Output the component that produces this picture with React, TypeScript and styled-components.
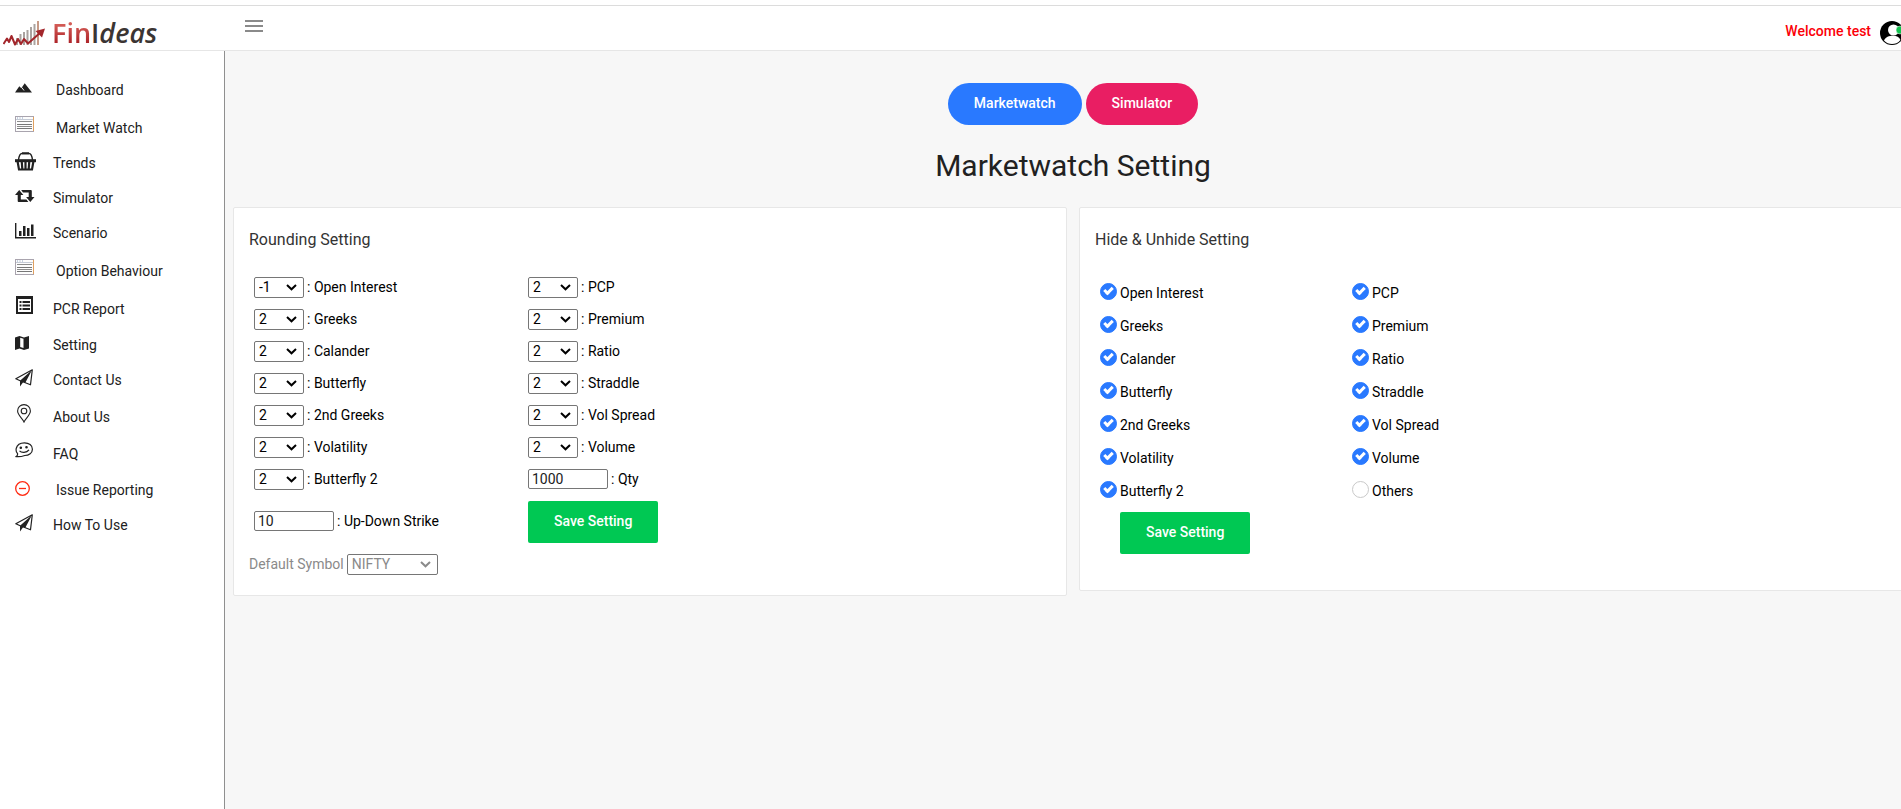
import React, { useState } from "react";
import styled, { createGlobalStyle, css } from "styled-components";

const GlobalStyle = createGlobalStyle`
  *, *::before, *::after { box-sizing: border-box; }
  html, body { margin: 0; background: #f7f7f7; }
  body {
    overflow-x: hidden;
    font-family: Roboto, "Liberation Sans", sans-serif;
    font-size: 14px;
    line-height: 20px;
    color: #212121;
  }
  button, input, select { font: inherit; }
`;

/* The page runs slightly past the right edge of the window. */
const Page = styled.div`
  display: flex;
  flex-direction: column;
  width: calc(100% + 18px);
  min-height: 100vh;
  padding-top: 5px;
  background: #fff;
`;

const TopBar = styled.header`
  display: flex;
  align-items: center;
  height: 46px;
  padding-right: 15px;
  border-top: 1px solid #dcdcdc;
  border-bottom: 1px solid #e6e6e6;
`;

const Brand = styled.a`
  display: flex;
  align-items: center;
  gap: 7px;
  width: 241px;
  padding: 10px 0 0 3px;
  text-decoration: none;
`;

const BrandName = styled.span`
  font-family: "Open Sans", sans-serif;
  font-size: 27px;
  line-height: 28px;
  font-weight: 600;
  color: #3b3533;
  white-space: nowrap;
`;

const BrandRed = styled.span`
  color: transparent;
  background: linear-gradient(#dd6a62 15%, #a81c22 85%);
  background-clip: text;
`;

const BrandSlant = styled.span`
  font-style: italic;
`;

const MenuToggle = styled.button`
  display: flex;
  padding: 4px;
  margin-bottom: 4px;
  border: 0;
  background: none;
  cursor: pointer;
`;

const Account = styled.div`
  display: flex;
  align-items: center;
  gap: 9px;
  margin-left: auto;
  padding-top: 10px;
`;

const Welcome = styled.span`
  padding-bottom: 4px;
  font-weight: 500;
  color: #fb0007;
`;

const Body = styled.div`
  display: flex;
  flex: 1;
`;

const Sidebar = styled.nav`
  flex: 0 0 225px;
  padding-top: 19px;
  border-right: 1px solid #8f8f8f;
  background: #fff;
`;

const Menu = styled.ul`
  margin: 0;
  padding: 0;
  list-style: none;
`;

const MenuLink = styled.a<{ $height: number; $wide?: boolean }>`
  display: flex;
  align-items: flex-end;
  gap: ${(p) => (p.$wide ? 21 : 18)}px;
  height: ${(p) => p.$height}px;
  padding-left: 15px;
  color: #212121;
  text-decoration: none;
`;

const IconSlot = styled.span<{ $lift: number }>`
  display: flex;
  align-items: center;
  flex: 0 0 20px;
  min-width: 0;
  height: 20px;
  margin-bottom: ${(p) => p.$lift}px;

  svg { flex: none; }
`;

const Main = styled.main`
  flex: 1;
  min-width: 0;
  padding: 32px 6px 0 8px;
  background: #f7f7f7;
`;

const Switcher = styled.div`
  display: flex;
  justify-content: center;
  gap: 4px;
`;

const buttonBase = css`
  height: 42px;
  padding: 0 26px 2px;
  border: 0;
  font-weight: 500;
  color: #fff;
  cursor: pointer;
`;

const Pill = styled.button<{ $color: string }>`
  ${buttonBase}
  border-radius: 21px;
  background: ${(p) => p.$color};
`;

const SaveButton = styled.button`
  ${buttonBase}
  justify-self: start;
  border-radius: 2px;
  background: #00c853;
`;

const PageTitle = styled.h1`
  margin: 21px 0;
  font-size: 30px;
  line-height: 40px;
  font-weight: 400;
  text-align: center;
`;

const Cards = styled.div`
  display: grid;
  grid-template-columns: 1fr 1fr;
  align-items: start;
  gap: 12px;
`;

const Card = styled.form<{ $bottom: number }>`
  padding: 20px 15px ${(p) => p.$bottom}px;
  border: 1px solid #e7e7e7;
  border-radius: 2px;
  background: #fff;
  color: #000;
`;

const CardTitle = styled.h2<{ $gap: number }>`
  margin: 0 0 ${(p) => p.$gap}px;
  font-size: 16px;
  line-height: 24px;
  font-weight: 400;
  color: #333;
`;

const FieldGrid = styled.div`
  display: grid;
  grid-template-columns: 274px 274px;
  grid-auto-rows: minmax(32px, auto);
  align-items: center;
  padding-left: 5px;
`;

const Field = styled.div`
  display: flex;
  align-items: center;
  gap: 3px;
`;

const SaveCell = styled.div`
  display: grid;
  padding: 6px 0 4px;
`;

const SelectBox = styled.span<{ $width: number }>`
  position: relative;
  display: flex;
  width: ${(p) => p.$width}px;

  svg {
    position: absolute;
    right: 7px;
    top: 7px;
    pointer-events: none;
  }
`;

const Select = styled.select`
  appearance: none;
  width: 100%;
  height: 21px;
  padding: 0 20px 0 4px;
  border: 1px solid #767676;
  border-radius: 2px;
  background: #fff;
  line-height: 18px;
  color: inherit;
`;

const TextBox = styled.input`
  width: 80px;
  height: 20px;
  padding: 0 3px;
  border: 1px solid #767676;
  border-radius: 2px;
  color: #212121;
`;

const DefaultRow = styled.div`
  display: flex;
  align-items: center;
  gap: 3px;
  height: 34px;
  color: #8a8a8a;
`;

const CheckGrid = styled.div`
  display: grid;
  grid-template-columns: 252px 252px;
  grid-auto-rows: 33px;
  align-items: center;
  padding-left: 5px;
`;

const CheckField = styled.div`
  display: flex;
  align-items: center;
  gap: 3px;
`;

const CheckLabel = styled.label`
  padding-top: 2px;
`;

const Tick = styled.input`
  appearance: none;
  display: grid;
  place-items: center;
  width: 17px;
  height: 17px;
  margin: 0;
  border: 1px solid #c9c9c9;
  border-radius: 50%;
  background: #fff;

  &:checked {
    border-color: #2979ff;
    background: #2979ff;
  }

  &:checked::before {
    content: "";
    width: 9px;
    height: 6px;
    margin-bottom: 3px;
    border: solid #fff;
    border-width: 0 0 3px 3px;
    transform: rotate(-45deg);
  }
`;

const SaveRow = styled.div`
  display: grid;
  padding: 6px 0 0 25px;
`;

const LogoMark = () => (
  <svg width="42" height="25" viewBox="0 0 42 25" aria-hidden="true">
    <g fill="#aaa3a0">
      <rect x="13" y="17" width="2" height="7" />
      <rect x="16.5" y="13" width="2" height="11" />
      <rect x="20" y="11" width="2" height="13" />
      <rect x="23.5" y="9" width="2" height="15" />
      <rect x="27" y="6" width="2" height="18" />
      <rect x="30.5" y="3" width="2" height="21" />
    </g>
    <rect x="34" y="0" width="2" height="24" fill="#c79a86" />
    <path d="M0.5 23L4 17.500L6 21L8.500 15L12 23.500L15 18L18 23L21 18L25 22.500L38 11" fill="none" stroke="#a3262b" strokeWidth="2" strokeLinejoin="round" />
    <path d="M42 7.500L32.500 10L39 16.500Z" fill="#a3262b" />
  </svg>
);

const Bars = () => (
  <svg width="18" height="12" viewBox="0 0 18 12" fill="#8a8a8a" aria-hidden="true">
    <path d="M0 0h18v2H0zM0 5h18v2H0zM0 10h18v2H0z" />
  </svg>
);

const Chevron = () => (
  <svg width="11" height="7" viewBox="0 0 11 7" fill="none" stroke="currentColor" strokeWidth="2" aria-hidden="true">
    <path d="M1 1l4.500 4.300L10 1" />
  </svg>
);

const Avatar = () => (
  <svg width="24" height="26" viewBox="0 0 24 26" role="img" aria-label="Account">
    <circle cx="12" cy="13" r="12" fill="#000" />
    <circle cx="13.500" cy="10" r="5.500" fill="#fff" />
    <path d="M4 20.500C5.500 17 9 15.800 13 15.800s6 1.200 7.500 4.200C18 23 15 24 12 24s-6-1-8-3.500z" fill="#fff" />
    <circle cx="20" cy="10" r="4" fill="#12c24e" stroke="#fff" strokeWidth="0.500" />
  </svg>
);

const Mountains = () => (
  <svg width="17" height="10" viewBox="0 0 17 10" fill="#212121">
    <path d="M0 9.500L4.300 3.200L6.300 5.200L9.700 0.300L17 9.500z" />
    <path d="M6.800 4.500L9 7.500" stroke="#fff" strokeWidth="0.900" />
  </svg>
);

const Listing = () => (
  <svg width="19" height="16" viewBox="0 0 19 16">
    <rect x="0.500" y="0.500" width="18" height="15" fill="#fdfdfd" stroke="#a9a4ae" />
    <path d="M1 3.500h17" stroke="#c5cbd6" />
    <path d="M2 2h1M4.500 2h1M7 2h1" stroke="#8aa0c0" />
    <path d="M2 5.500h15M2 10.500h15" stroke="#8c8c8c" />
    <path d="M2 8.500h15M2 12.500h15" stroke="#777" />
    <path d="M18.500 1v14" stroke="#e0a060" />
  </svg>
);

const Basket = () => (
  <svg width="21" height="19" viewBox="0 0 21 19" fill="none" stroke="#212121">
    <path d="M3.500 8C4 4 5 1.500 7 1.500h7c2 0 3 2.500 3.500 6.500" strokeWidth="1.400" />
    <path d="M7 1.300h7" strokeWidth="2" />
    <path d="M0 8.700h21" strokeWidth="3" />
    <path d="M2.500 9l1.500 8.500h13L18.500 9M6.700 9l.6 8M10.500 9v8M14.300 9l-.6 8" strokeWidth="2.200" />
  </svg>
);

const Repeat = () => (
  <svg width="20" height="12" viewBox="0 0 20 12" fill="#212121">
    <path d="M4.200 0L8.400 5H5.800V9.400H11.500L13.300 12H3.600Q2.700 12 2.700 11V5H0z" />
    <path d="M15.300 12L11.100 7H13.700V2.600H8L6.200 0H15.900Q16.800 0 16.800 1V7H19.500z" />
  </svg>
);

const Chart = () => (
  <svg width="21" height="16" viewBox="0 0 21 16" fill="#212121">
    <path d="M0 0h1.400v14H21v1.500H0zM4 8h2.500v5H4zM8 3h2.500v10H8zM12 5h2.500v8H12zM16 1.500h2.500V13H16z" />
  </svg>
);

const Report = () => (
  <svg width="18" height="18" viewBox="0 0 18 18">
    <rect x="1" y="0" width="17" height="18" fill="#212121" />
    <rect x="3" y="3" width="13" height="13" fill="#fff" />
    <path d="M4.500 5h2v2h-2zM4.500 8.500h2v2h-2zM4.500 12h2v2h-2zM7.500 5H15v2H7.500zM7.500 8.500H15v2H7.500zM7.500 12H15v2H7.500z" fill="#212121" />
  </svg>
);

const MapFold = () => (
  <svg width="14" height="14" viewBox="0 0 14 14">
    <path d="M0 1.500L4.500 0L9 1.500L14 0V12.500L9 14L4.500 12.500L0 14z" fill="#212121" />
    <path d="M5.200 1.800L8.500 2.800V12L5.200 11z" fill="#fff" />
  </svg>
);

const Plane = () => (
  <svg width="18" height="18" viewBox="0 0 18 18">
    <path d="M17.300 0.800L0.800 9.800L5.200 11.800L15.500 15.800z" fill="#fff" stroke="#212121" strokeWidth="1.200" strokeLinejoin="round" />
    <path d="M17 1L5 11.800V17.500L8.300 13L10.300 13.800z" fill="#212121" />
  </svg>
);

const Pin = () => (
  <svg width="18" height="19" viewBox="0 0 18 19" fill="none" stroke="#212121" strokeWidth="1.100">
    <path d="M9 18C7.500 14.500 2.600 11 2.600 7A6.400 6.400 0 0 1 15.400 7C15.400 11 10.500 14.500 9 18z" />
    <circle cx="9" cy="7" r="2.800" />
  </svg>
);

const Smiley = () => (
  <svg width="18" height="16" viewBox="0 0 18 16" fill="none" stroke="#212121" strokeWidth="1.200">
    <path d="M2.500 11.500C0.800 10 1 7.800 1.200 6.500C2 3 5.500 0.800 9.500 0.800C14 0.800 17.400 3.300 17.400 7.200C17.400 11 14 13.500 9.800 13.500C7.500 14.300 4.500 15 1.200 14.600C2.500 13.800 2.800 12.800 2.500 11.500z" />
    <path d="M4.500 8.800C6.500 11 11.500 11 14 7.800" />
    <circle cx="5.800" cy="5.800" r="0.700" fill="#212121" />
    <circle cx="11.500" cy="5.200" r="0.700" fill="#212121" />
  </svg>
);

const Minus = () => (
  <svg width="15" height="15" viewBox="0 0 15 15" fill="none" stroke="#ff2a12" strokeWidth="1.300">
    <circle cx="7.500" cy="7.500" r="6.800" />
    <path d="M4 7.500h7" />
  </svg>
);

const menu: { label: string; icon: React.FC; height: number; lift: number; wide?: boolean }[] = [
  { label: "Dashboard", icon: Mountains, height: 30, lift: 2, wide: true },
  { label: "Market Watch", icon: Listing, height: 38, lift: 4, wide: true },
  { label: "Trends", icon: Basket, height: 35, lift: 2 },
  { label: "Simulator", icon: Repeat, height: 35, lift: 2 },
  { label: "Scenario", icon: Chart, height: 35, lift: 2 },
  { label: "Option Behaviour", icon: Listing, height: 38, lift: 4, wide: true },
  { label: "PCR Report", icon: Report, height: 38, lift: 4 },
  { label: "Setting", icon: MapFold, height: 36, lift: 2 },
  { label: "Contact Us", icon: Plane, height: 35, lift: 2 },
  { label: "About Us", icon: Pin, height: 37, lift: 4 },
  { label: "FAQ", icon: Smiley, height: 37, lift: 4 },
  { label: "Issue Reporting", icon: Minus, height: 36, lift: 2, wide: true },
  { label: "How To Use", icon: Plane, height: 35, lift: 2 },
];

const rounding: { label: string; value: string; text?: boolean }[] = [
  { label: "Open Interest", value: "-1" },
  { label: "PCP", value: "2" },
  { label: "Greeks", value: "2" },
  { label: "Premium", value: "2" },
  { label: "Calander", value: "2" },
  { label: "Ratio", value: "2" },
  { label: "Butterfly", value: "2" },
  { label: "Straddle", value: "2" },
  { label: "2nd Greeks", value: "2" },
  { label: "Vol Spread", value: "2" },
  { label: "Volatility", value: "2" },
  { label: "Volume", value: "2" },
  { label: "Butterfly 2", value: "2" },
  { label: "Qty", value: "1000", text: true },
  { label: "Up-Down Strike", value: "10", text: true },
];

const columns = [
  "Open Interest", "PCP", "Greeks", "Premium", "Calander", "Ratio", "Butterfly",
  "Straddle", "2nd Greeks", "Vol Spread", "Volatility", "Volume", "Butterfly 2", "Others",
];

const slug = (s: string) => s.toLowerCase().replace(/[^a-z0-9]+/g, "-");

function DropDown(props: { id: string; value: string; options: string[]; width: number }) {
  return (
    <SelectBox $width={props.width}>
      <Select id={props.id} defaultValue={props.value}>
        {props.options.map((o) => (
          <option key={o}>{o}</option>
        ))}
      </Select>
      <Chevron />
    </SelectBox>
  );
}

export default function App() {
  const [menuOpen, setMenuOpen] = useState(true);

  return (
    <>
      <GlobalStyle />
      <Page>
        <TopBar>
          <Brand href="#">
            <LogoMark />
            <BrandName>
              <BrandRed>Fin</BrandRed>I<BrandSlant>deas</BrandSlant>
            </BrandName>
          </Brand>
          <MenuToggle type="button" aria-label="Toggle menu" onClick={() => setMenuOpen(!menuOpen)}>
            <Bars />
          </MenuToggle>
          <Account>
            <Welcome>Welcome test</Welcome>
            <Avatar />
          </Account>
        </TopBar>
        <Body>
          {menuOpen && (
            <Sidebar>
              <Menu>
                {menu.map(({ label, icon: Icon, height, lift, wide }) => (
                  <li key={label}>
                    <MenuLink href="#" $height={height} $wide={wide}>
                      <IconSlot $lift={lift} aria-hidden="true">
                        <Icon />
                      </IconSlot>
                      {label}
                    </MenuLink>
                  </li>
                ))}
              </Menu>
            </Sidebar>
          )}
          <Main>
            <Switcher>
              <Pill type="button" $color="#2979ff">Marketwatch</Pill>
              <Pill type="button" $color="#e91e63">Simulator</Pill>
            </Switcher>
            <PageTitle>Marketwatch Setting</PageTitle>
            <Cards>
              <Card $bottom={14} onSubmit={(e) => e.preventDefault()}>
                <CardTitle $gap={19}>Rounding Setting</CardTitle>
                <FieldGrid>
                  {rounding.map(({ label, value, text }) => {
                    const id = "round-" + slug(label);
                    return (
                      <Field key={label}>
                        {text ? (
                          <TextBox id={id} type="text" defaultValue={value} />
                        ) : (
                          <DropDown id={id} value={value} options={["-1", "0", "1", "2", "3"]} width={50} />
                        )}
                        <label htmlFor={id}>: {label}</label>
                      </Field>
                    );
                  })}
                  <SaveCell>
                    <SaveButton type="submit">Save Setting</SaveButton>
                  </SaveCell>
                </FieldGrid>
                <DefaultRow>
                  <label htmlFor="default-symbol">Default Symbol</label>
                  <DropDown id="default-symbol" value="NIFTY" options={["NIFTY", "BANKNIFTY"]} width={91} />
                </DefaultRow>
              </Card>
              <Card $bottom={36} onSubmit={(e) => e.preventDefault()}>
                <CardTitle $gap={23}>Hide &amp; Unhide Setting</CardTitle>
                <CheckGrid>
                  {columns.map((label) => {
                    const id = "show-" + slug(label);
                    return (
                      <CheckField key={label}>
                        <Tick id={id} type="checkbox" defaultChecked={label !== "Others"} />
                        <CheckLabel htmlFor={id}>{label}</CheckLabel>
                      </CheckField>
                    );
                  })}
                </CheckGrid>
                <SaveRow>
                  <SaveButton type="submit">Save Setting</SaveButton>
                </SaveRow>
              </Card>
            </Cards>
          </Main>
        </Body>
      </Page>
    </>
  );
}
